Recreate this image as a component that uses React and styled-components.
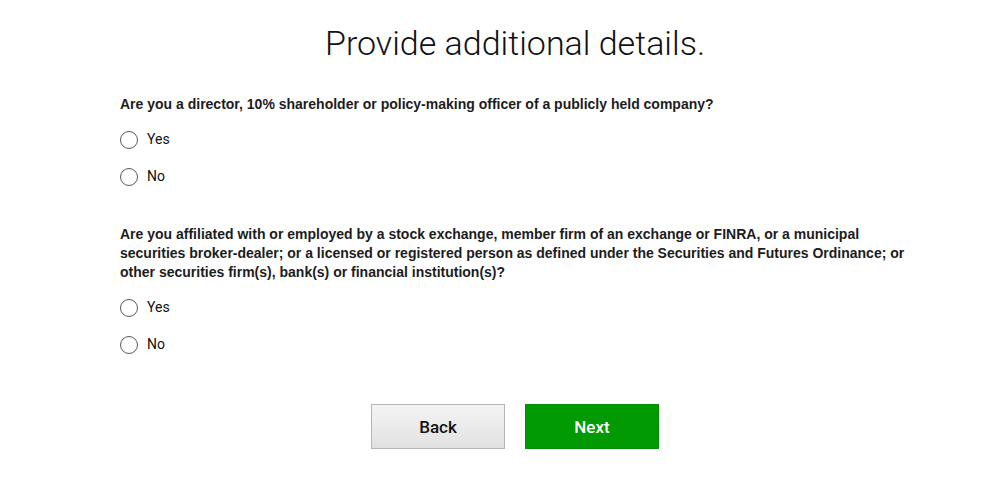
import React, { useState } from 'react';
import styled, { createGlobalStyle } from 'styled-components';

const GlobalStyle = createGlobalStyle`
  html, body {
    margin: 0;
    padding: 0;
    background: #fff;
  }
  body {
    font-family: "Liberation Sans", Arial, sans-serif;
    color: #111;
  }
`;

const Page = styled.div`
  width: 790px;
  padding: 20px 0 0 120px;
`;

const Title = styled.h1`
  margin: 0 0 29px;
  text-align: center;
  font-family: Roboto, "Liberation Sans", sans-serif;
  font-weight: 300;
  font-size: 34px;
  line-height: 46px;
  color: #111;
`;

const Question = styled.div`
  display: flex;
  flex-direction: column;
  gap: 16px;
  margin-bottom: ${props => props.$gap}px;
`;

const Prompt = styled.p`
  margin: 0;
  font-size: 14px;
  line-height: 19px;
  font-weight: 700;
  color: #1c1c1c;
`;

const Options = styled.div`
  display: flex;
  flex-direction: column;
  gap: 18px;
`;

const Option = styled.label`
  display: flex;
  align-items: center;
  gap: 9px;
  font-family: Roboto, "Liberation Sans", sans-serif;
  font-size: 14px;
  line-height: 19px;
  color: #111;
  cursor: pointer;
`;

const RadioInput = styled.input`
  appearance: none;
  margin: 0;
  width: 18px;
  height: 18px;
  border: 1.5px solid #5a5a5a;
  border-radius: 50%;
  box-sizing: border-box;
  background: #fff;
  display: grid;
  place-items: center;

  &:checked::after {
    content: '';
    width: 8px;
    height: 8px;
    border-radius: 50%;
    background: #333;
  }
`;

const Actions = styled.div`
  display: flex;
  justify-content: center;
  gap: 20px;
  margin-top: 50px;
`;

const Button = styled.button`
  width: 134px;
  height: 45px;
  font-family: Roboto, "Liberation Sans", Arial, sans-serif;
  font-size: 17px;
  font-weight: 500;
  cursor: pointer;
  border: 1px solid ${props => (props.$primary ? '#078a07' : '#b5b5b5')};
  color: ${props => (props.$primary ? '#fff' : '#111')};
  background: ${props =>
    props.$primary ? '#029a02' : 'linear-gradient(#f4f4f4, #e1e1e1)'};
`;

const questions = [
  {
    id: 'director',
    text: 'Are you a director, 10% shareholder or policy-making officer of a publicly held company?',
    gap: 39
  },
  {
    id: 'affiliated',
    text: 'Are you affiliated with or employed by a stock exchange, member firm of an exchange or FINRA, or a municipal securities broker-dealer; or a licensed or registered person as defined under the Securities and Futures Ordinance; or other securities firm(s), bank(s) or financial institution(s)?',
    gap: 0
  }
];

export default function App() {
  const [answers, setAnswers] = useState({});

  return (
    <>
      <GlobalStyle />
      <Page>
        <Title>Provide additional details.</Title>
        {questions.map(q => (
          <Question key={q.id} $gap={q.gap} role="radiogroup">
            <Prompt>{q.text}</Prompt>
            <Options>
              {['Yes', 'No'].map(choice => (
                <Option key={choice}>
                  <RadioInput
                    type="radio"
                    name={q.id}
                    checked={answers[q.id] === choice}
                    onChange={() => setAnswers({ ...answers, [q.id]: choice })}
                  />
                  {choice}
                </Option>
              ))}
            </Options>
          </Question>
        ))}
        <Actions>
          <Button type="button">Back</Button>
          <Button type="button" $primary>
            Next
          </Button>
        </Actions>
      </Page>
    </>
  );
}
